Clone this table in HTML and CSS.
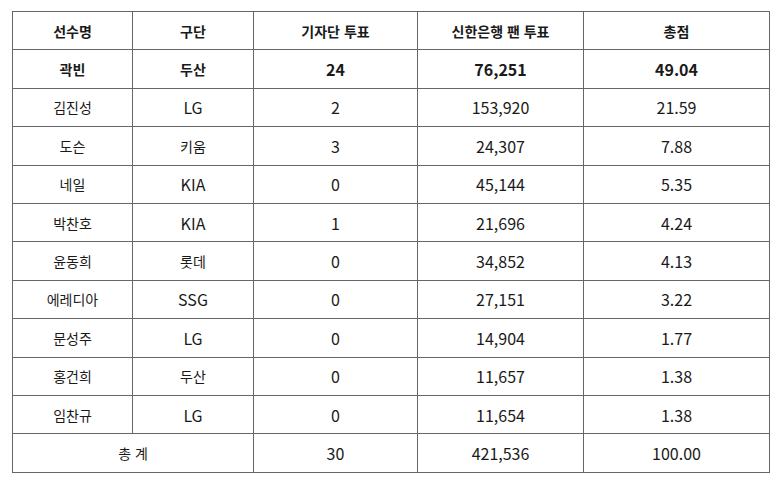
FILE: index.html
```html
<!DOCTYPE html>
<html lang="ko">
<head>
<meta charset="utf-8">
<link rel="stylesheet" href="styles.css">
</head>
<body>
<table class="vote">
  <colgroup>
    <col class="c1"><col class="c2"><col class="c3"><col class="c4"><col class="c5">
  </colgroup>
  <tr class="head"><td>선수명</td><td>구단</td><td>기자단 투표</td><td>신한은행 팬 투표</td><td>총점</td></tr>
  <tr class="win"><td>곽빈</td><td>두산</td><td class="num">24</td><td class="num">76,251</td><td class="num">49.04</td></tr>
  <tr><td>김진성</td><td class="num">LG</td><td class="num">2</td><td class="num">153,920</td><td class="num">21.59</td></tr>
  <tr><td>도슨</td><td>키움</td><td class="num">3</td><td class="num">24,307</td><td class="num">7.88</td></tr>
  <tr><td>네일</td><td class="num">KIA</td><td class="num">0</td><td class="num">45,144</td><td class="num">5.35</td></tr>
  <tr><td>박찬호</td><td class="num">KIA</td><td class="num">1</td><td class="num">21,696</td><td class="num">4.24</td></tr>
  <tr><td>윤동희</td><td>롯데</td><td class="num">0</td><td class="num">34,852</td><td class="num">4.13</td></tr>
  <tr><td>에레디아</td><td class="num">SSG</td><td class="num">0</td><td class="num">27,151</td><td class="num">3.22</td></tr>
  <tr><td>문성주</td><td class="num">LG</td><td class="num">0</td><td class="num">14,904</td><td class="num">1.77</td></tr>
  <tr><td>홍건희</td><td>두산</td><td class="num">0</td><td class="num">11,657</td><td class="num">1.38</td></tr>
  <tr><td>임찬규</td><td class="num">LG</td><td class="num">0</td><td class="num">11,654</td><td class="num">1.38</td></tr>
  <tr><td colspan="2">총 계</td><td class="num">30</td><td class="num">421,536</td><td class="num">100.00</td></tr>
</table>
</body>
</html>
```
FILE: styles.css
```css
html, body {
  margin: 0;
  padding: 0;
  background: #fff;
}
body {
  padding: 11px 0 0 12px;
}
.vote {
  border-collapse: collapse;
  table-layout: fixed;
  width: 758px;
  font-family: "Noto Sans CJK KR", "Noto Sans", sans-serif;
  font-size: 14px;
  color: #1a1a1a;
}
.c1 { width: 120px; }
.c2 { width: 121px; }
.c3 { width: 164px; }
.c4 { width: 166px; }
.c5 { width: 186px; }
.vote tr {
  height: 38.4px;
}
.vote td {
  border: 1px solid #666;
  text-align: center;
  vertical-align: middle;
  padding: 0;
  line-height: 18px;
}
.vote td.num {
  font-size: 16px;
}
.head td, .win td {
  font-weight: bold;
}
```
